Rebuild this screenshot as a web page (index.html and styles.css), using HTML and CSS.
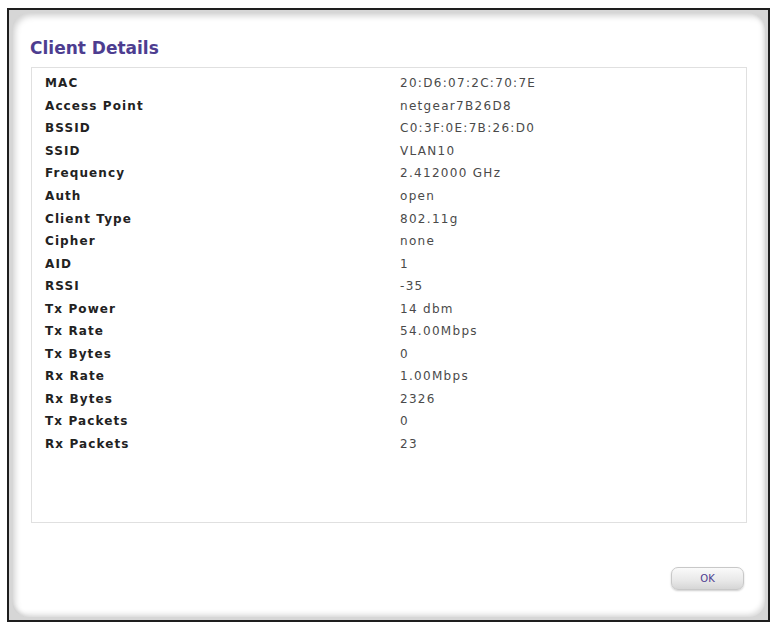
FILE: index.html
```html
<!DOCTYPE html>
<html>
<head>
<meta charset="utf-8">
<link rel="stylesheet" href="styles.css">
</head>
<body>
<div class="frame">
  <div class="panel">
    <h1 class="title">Client Details</h1>
    <div class="details">
      <div class="row"><span class="label">MAC</span><span class="value">20:D6:07:2C:70:7E</span></div>
      <div class="row"><span class="label">Access Point</span><span class="value">netgear7B26D8</span></div>
      <div class="row"><span class="label">BSSID</span><span class="value">C0:3F:0E:7B:26:D0</span></div>
      <div class="row"><span class="label">SSID</span><span class="value">VLAN10</span></div>
      <div class="row"><span class="label">Frequency</span><span class="value">2.412000 GHz</span></div>
      <div class="row"><span class="label">Auth</span><span class="value">open</span></div>
      <div class="row"><span class="label">Client Type</span><span class="value">802.11g</span></div>
      <div class="row"><span class="label">Cipher</span><span class="value">none</span></div>
      <div class="row"><span class="label">AID</span><span class="value">1</span></div>
      <div class="row"><span class="label">RSSI</span><span class="value">-35</span></div>
      <div class="row"><span class="label">Tx Power</span><span class="value">14 dbm</span></div>
      <div class="row"><span class="label">Tx Rate</span><span class="value">54.00Mbps</span></div>
      <div class="row"><span class="label">Tx Bytes</span><span class="value">0</span></div>
      <div class="row"><span class="label">Rx Rate</span><span class="value">1.00Mbps</span></div>
      <div class="row"><span class="label">Rx Bytes</span><span class="value">2326</span></div>
      <div class="row"><span class="label">Tx Packets</span><span class="value">0</span></div>
      <div class="row"><span class="label">Rx Packets</span><span class="value">23</span></div>
    </div>
    <div class="actions">
      <button class="ok">OK</button>
    </div>
  </div>
</div>
</body>
</html>
```
FILE: styles.css
```css
html, body {
  margin: 0;
  padding: 0;
  background: #ffffff;
}
body {
  font-family: "DejaVu Sans", Verdana, sans-serif;
}
.frame {
  margin: 8px 0 0 7px;
  width: 759px;
  height: 610px;
  border: 2px solid #1e1e1e;
  background: #d6d6d6;
  padding: 0;
  display: flex;
}
.panel {
  flex: 1;
  margin: 3px;
  background: #ffffff;
  border-radius: 16px;
  box-shadow: inset 3px 3px 6px rgba(0,0,0,0.18), inset -2px -3px 5px rgba(0,0,0,0.12);
  padding: 24px 18px 0 18px;
  display: flex;
  flex-direction: column;
}
.title {
  margin: 0;
  font-size: 17px;
  line-height: 22px;
  font-weight: bold;
  color: #4d3d90;
}
.details {
  margin-top: 8px;
  height: 450px;
  border: 1px solid #e0e0e0;
  padding: 4px 0 0 13px;
  margin-left: 1px;
}
.row {
  display: flex;
  height: 22.56px;
  align-items: center;
  font-size: 12px;
}
.label {
  width: 355px;
  font-weight: bold;
  color: #222222;
  letter-spacing: 1.1px;
}
.value {
  color: #4a4a4a;
  letter-spacing: 1.3px;
}
.actions {
  display: flex;
  justify-content: flex-end;
  margin-top: 44px;
  padding-right: 3px;
}
.ok {
  width: 73px;
  height: 23px;
  border: 1px solid #c8c8c8;
  border-radius: 7px;
  background: linear-gradient(#fafafa, #e8e8e8 60%, #d6d6d6);
  box-shadow: 0 1px 2px rgba(0,0,0,0.2);
  font-family: "DejaVu Sans", Verdana, sans-serif;
  font-size: 10px;
  color: #4d3d90;
  padding: 0;
}
```
